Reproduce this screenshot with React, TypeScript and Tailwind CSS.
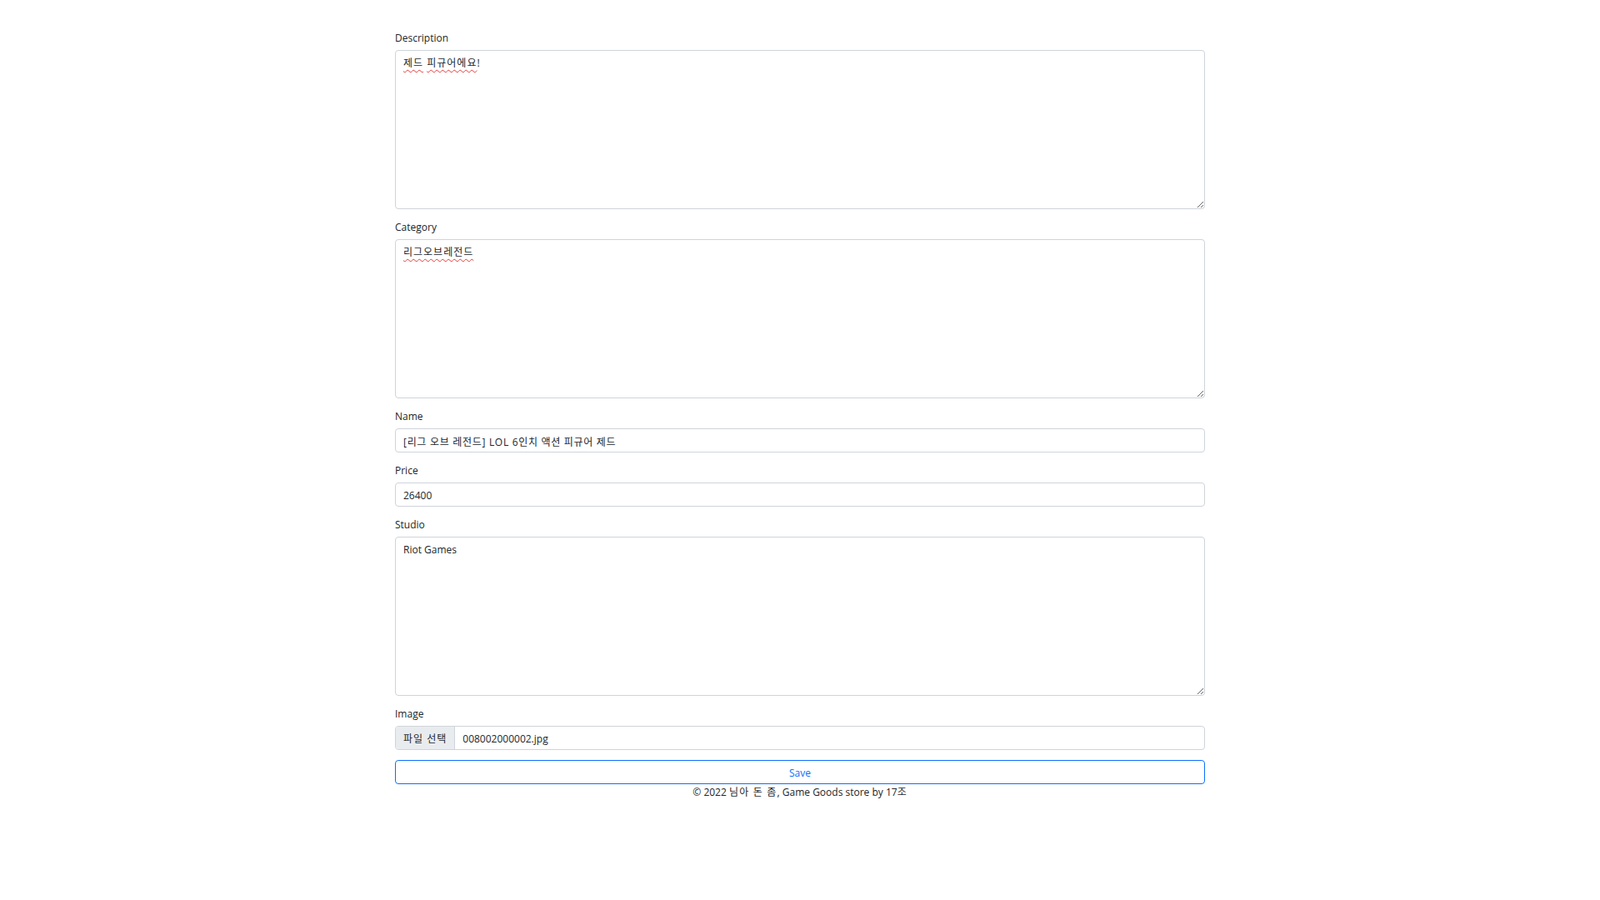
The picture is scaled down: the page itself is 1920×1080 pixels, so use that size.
import React from "react";

const font = { fontFamily: '"Open Sans", "Noto Sans CJK KR", sans-serif' };

function Label({ children }: { children: React.ReactNode }) {
    return <label className="block pt-[1px] mb-[5px] text-[12px] leading-[18px] text-[#212529]">{children}</label>;
}

// Chrome's spellcheck squiggle
function Typo({ children }: { children: React.ReactNode }) {
    return <span className="underline decoration-wavy decoration-[#e53935] decoration-[1px] underline-offset-[3px]">{children}</span>;
}

function Area({ children }: { children: React.ReactNode }) {
    return <div
        contentEditable
        suppressContentEditableWarning
        role="textbox"
        aria-multiline="true"
        className="block w-full h-[191px] resize-y overflow-auto rounded-[4px] border border-[#ced4da] bg-white px-[9px] pt-[5.5px] pb-[4.5px] text-[12px] leading-[18px] text-[#212529] outline-none"
    >{children}</div>;
}

function Input({ value, className = "" }: { value: string, className?: string }) {
    return <input
        type="text"
        defaultValue={value}
        className={"block w-full h-[29px] rounded-[4px] border border-[#ced4da] bg-white px-[9px] pt-[2px] text-[12px] leading-[18px] text-[#212529] outline-none " + className}
        style={font}
    />;
}

export default function App() {
    return <div className="min-h-screen bg-white text-[#212529]" style={font}>
        <div className="mx-auto w-[972px] pt-[36px]">
            <form>
                <div className="mb-[12px]">
                    <Label>Description</Label>
                    <Area><span className="tracking-[1px]"><Typo>제드</Typo> <Typo>피규어에요</Typo>!</span></Area>
                </div>
                <div className="mb-[12px]">
                    <Label>Category</Label>
                    <Area><span className="tracking-[1px]"><Typo>리그오브레전드</Typo></span></Area>
                </div>
                <div className="mb-[12px]">
                    <Label>Name</Label>
                    <Input value="[리그 오브 레전드] LOL 6인치 액션 피규어 제드" className="tracking-[0.7px]" />
                </div>
                <div className="mb-[12px]">
                    <Label>Price</Label>
                    <Input value="26400" />
                </div>
                <div className="mb-[12px]">
                    <Label>Studio</Label>
                    <Area>Riot Games</Area>
                </div>
                <div className="mb-[12px]">
                    <Label>Image</Label>
                    <div className="flex h-[29px] w-full overflow-hidden rounded-[4px] border border-[#ced4da] bg-white text-[12px] leading-[18px]">
                        <span className="flex items-center border-r border-[#ced4da] bg-[#e9ecef] px-[9px] pt-[2px] tracking-[1px] text-[#212529]">파일 선택</span>
                        <span className="flex items-center px-[9px] pt-[2px] text-[#212529]">008002000002.jpg</span>
                    </div>
                </div>
                <button type="button" className="block w-full h-[29px] rounded-[4px] border border-[#0d6efd] bg-white pt-[2px] text-[12px] leading-[18px] text-[#0d6efd]">Save</button>
            </form>
            <footer className="pt-[1px] text-center text-[12px] leading-[18px] text-[#212529]">
                © 2022 <span className="tracking-[1.2px]">님아 돈 좀</span>, Game Goods store by 17<span className="tracking-[1px]">조</span>
            </footer>
        </div>
    </div>;
}
